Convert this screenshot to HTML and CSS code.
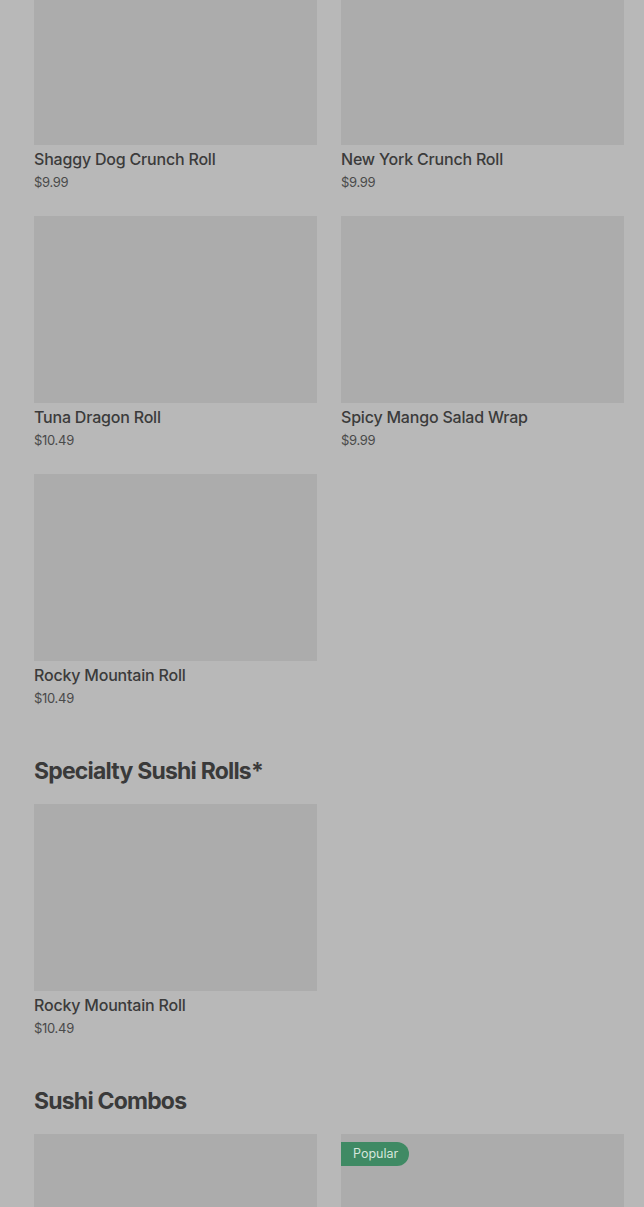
FILE: index.html
```html
<!DOCTYPE html>
<html lang="en">
<head>
    <meta charset="UTF-8">
    <meta name="viewport" content="width=device-width, initial-scale=1.0">
    <title>Menu</title>
    <link rel="stylesheet" href="styles.css">
</head>
<body>
    <div class="menu">
        <section class="section">
            <div class="grid">
                <div class="item">
                    <div class="thumb"></div>
                    <div class="name">Shaggy Dog Crunch Roll</div>
                    <div class="price">$9.99</div>
                </div>
                <div class="item">
                    <div class="thumb"></div>
                    <div class="name">New York Crunch Roll</div>
                    <div class="price">$9.99</div>
                </div>
                <div class="item">
                    <div class="thumb"></div>
                    <div class="name">Tuna Dragon Roll</div>
                    <div class="price">$10.49</div>
                </div>
                <div class="item">
                    <div class="thumb"></div>
                    <div class="name">Spicy Mango Salad Wrap</div>
                    <div class="price">$9.99</div>
                </div>
                <div class="item">
                    <div class="thumb"></div>
                    <div class="name">Rocky Mountain Roll</div>
                    <div class="price">$10.49</div>
                </div>
            </div>
        </section>

        <section class="section">
            <h2>Specialty Sushi Rolls*</h2>
            <div class="grid">
                <div class="item">
                    <div class="thumb"></div>
                    <div class="name">Rocky Mountain Roll</div>
                    <div class="price">$10.49</div>
                </div>
            </div>
        </section>

        <section class="section">
            <h2>Sushi Combos</h2>
            <div class="grid">
                <div class="item">
                    <div class="thumb"></div>
                </div>
                <div class="item">
                    <div class="thumb">
                        <span class="badge">Popular</span>
                    </div>
                </div>
            </div>
        </section>
    </div>
</body>
</html>
```

FILE: styles.css
```css
body {
    margin: 0;
    background-color: #b8b8b8;
    font-family: Inter, "Noto Sans", sans-serif;
    color: #3c3c3c;
}
.menu {
    margin-top: -42px;
    padding: 0 20px 0 34px;
}
.section h2 {
    margin: 47px 0 17px;
    font-size: 23px;
    line-height: 32px;
    font-weight: 700;
    letter-spacing: -0.8px;
    color: #3a3a3a;
}
.grid {
    display: grid;
    grid-template-columns: 1fr 1fr;
    column-gap: 24px;
    row-gap: 24px;
}
.thumb {
    position: relative;
    height: 187px;
    background-color: #acacac;
}
.name {
    margin-top: 2px;
    font-size: 16px;
    line-height: 24px;
    font-weight: 500;
    letter-spacing: -0.2px;
    color: #3b3b3b;
}
.price {
    margin-top: 1px;
    font-size: 13px;
    line-height: 20px;
    letter-spacing: -0.3px;
    color: #4a4a4a;
}
.badge {
    position: absolute;
    top: 8px;
    left: 0;
    height: 24px;
    line-height: 24px;
    padding: 0 11px 0 12px;
    border-radius: 0 12px 12px 0;
    background-color: #3f8a64;
    color: #d5e6dc;
    font-size: 12.5px;
}
```
